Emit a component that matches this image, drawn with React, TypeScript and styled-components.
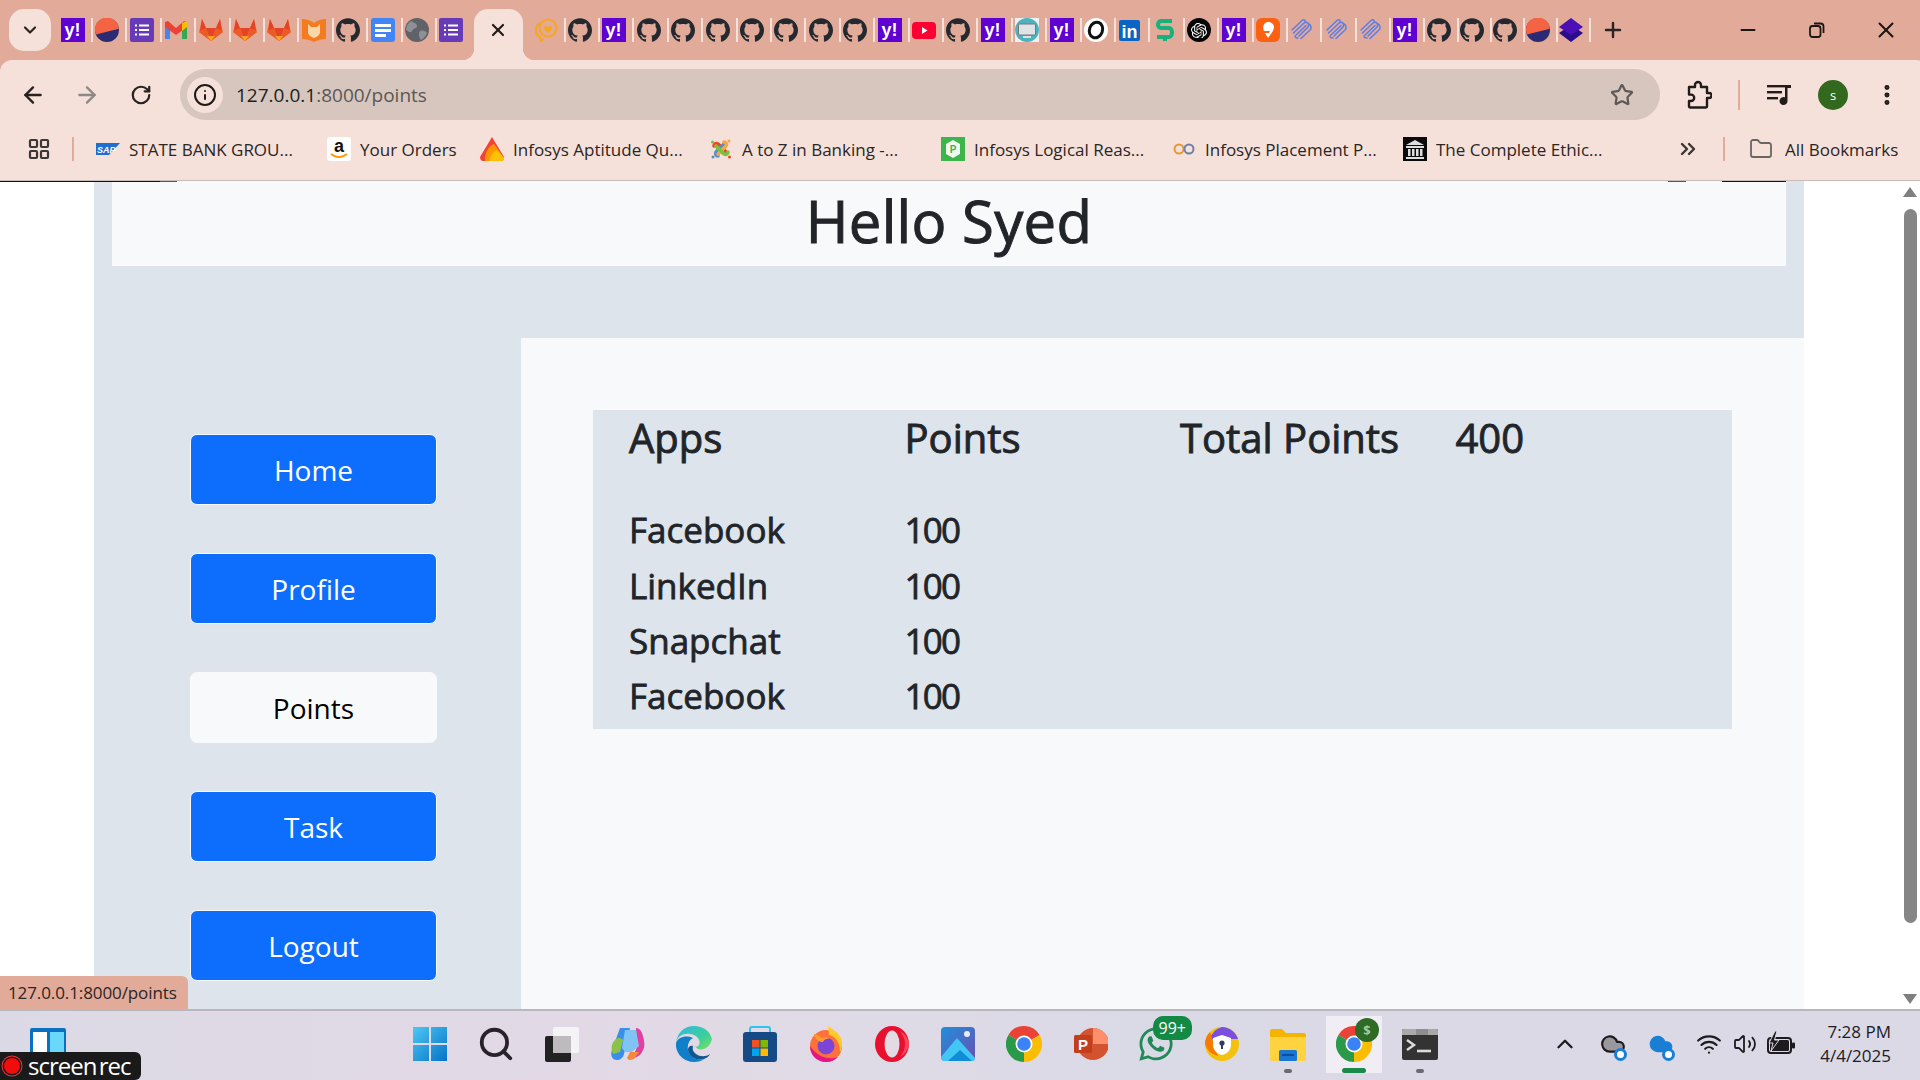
import React from 'react'
import styled, { createGlobalStyle } from 'styled-components'
import {
  ArrowLeft, ArrowRight, RotateCw, Info, Star, EllipsisVertical, Plus, Minus,
  X, ChevronDown, ChevronUp, LayoutGrid, ChevronsRight, Folder, Search, Cloud, Wifi, Volume2,
} from 'lucide-react'
import { SiGithub, SiOpenai } from 'react-icons/si'
import { FaWhatsapp } from 'react-icons/fa'

const GlobalStyle = createGlobalStyle`
  html, body { margin: 0; padding: 0; height: 100%; overflow: hidden; }
  body { font-family: "Open Sans", "Noto Sans", sans-serif; color: #212529; }
  * { box-sizing: border-box; }
`

/* ─── Browser chrome ────────────────────────────────── */

const Root = styled.div`
  display: flex;
  flex-direction: column;
  width: 1920px;
  height: 1080px;
  overflow: hidden;
  position: relative;
  background: #fff;
`

const TabStrip = styled.div`
  height: 60px;
  flex-shrink: 0;
  display: flex;
  align-items: center;
  background: #e2aa99;
  padding-left: 9px;
`

const TabMenu = styled.div`
  width: 42px;
  height: 42px;
  margin-right: 10px;
  border-radius: 15px;
  background: #f5e1da;
  display: flex;
  align-items: center;
  justify-content: center;
  color: #2a2422;
`

const TabSlot = styled.div<{ $tight?: boolean }>`
  width: ${p => (p.$tight ? 33.2 : 34.4)}px;
  flex-shrink: 0;
  display: flex;
  align-items: center;
  gap: 6px;
  height: 24px;
`

const TabSep = styled.span`
  width: 2px;
  height: 24px;
  background: #f5e1da;
  flex-shrink: 0;
`

const ActiveTab = styled.div`
  width: 49px;
  height: 51px;
  margin: 9px 11px 0 0;
  align-self: flex-start;
  background: #f5e1da;
  border-radius: 14px 14px 0 0;
  position: relative;
  display: flex;
  align-items: center;
  justify-content: center;
  padding-bottom: 9px;
  color: #1f1a18;

  &::before, &::after {
    content: '';
    position: absolute;
    bottom: 0;
    width: 12px;
    height: 12px;
  }
  &::before {
    left: -12px;
    background: radial-gradient(circle at 0 0, transparent 12px, #f5e1da 12.5px);
  }
  &::after {
    right: -12px;
    background: radial-gradient(circle at 100% 0, transparent 12px, #f5e1da 12.5px);
  }
`

const NewTab = styled.div`
  margin-left: 8px;
  color: #2a2422;
  display: flex;
`

const WindowControls = styled.div`
  margin-left: auto;
  display: flex;
`

const WindowButton = styled.div`
  width: 69px;
  height: 60px;
  display: flex;
  align-items: center;
  justify-content: center;
  color: #1c1715;
`

const Toolbar = styled.div`
  height: 60px;
  flex-shrink: 0;
  display: flex;
  background: #e2aa99;
`

const ToolbarInner = styled.div`
  flex: 1;
  height: 60px;
  display: flex;
  align-items: center;
  background: #f5e1da;
  border-radius: 12px 12px 0 0;
  padding: 9px 0 0 20px;
`

const NavButton = styled.div<{ $muted?: boolean; $gap: number }>`
  width: 26px;
  margin-right: ${p => p.$gap}px;
  display: flex;
  justify-content: center;
  color: ${p => (p.$muted ? '#8f8885' : '#272220')};
`

const Omnibox = styled.div`
  width: 1480px;
  height: 51px;
  border-radius: 26px;
  background: #d6c6be;
  display: flex;
  align-items: center;
  padding: 0 26px 0 7px;
`

const InfoChip = styled.div`
  width: 36px;
  height: 36px;
  border-radius: 50%;
  background: #f5e1da;
  display: flex;
  align-items: center;
  justify-content: center;
  color: #1f1a18;
  margin-right: 13px;
`

const UrlHost = styled.span`
  font-size: 19px;
  color: #211d1b;
`

const UrlPath = styled.span`
  font-size: 19px;
  color: #5d5654;
`

const StarWrap = styled.div`
  margin-left: auto;
  display: flex;
  color: #5f5856;
`

const ToolIcon = styled.div<{ $w: number }>`
  width: ${p => p.$w}px;
  flex-shrink: 0;
  display: flex;
  justify-content: center;
  align-items: center;
  color: #211c1a;
`

const ToolSep = styled.span`
  width: 2px;
  height: 30px;
  background: #e2aa99;
  flex-shrink: 0;
`

const Avatar = styled.div`
  width: 30px;
  height: 30px;
  flex-shrink: 0;
  border-radius: 50%;
  background: #33691e;
  color: #fff;
  font-size: 13px;
  display: flex;
  align-items: center;
  justify-content: center;
`

const Bookmarks = styled.div`
  height: 61px;
  flex-shrink: 0;
  display: flex;
  align-items: center;
  background: #f5e1da;
  border-bottom: 1px solid #c9bcb6;
  padding: 0 0 2px 27px;
  color: #2a2624;
`

const BarSep = styled.span<{ $l: number; $r: number }>`
  width: 2px;
  height: 24px;
  background: #e2aa99;
  margin: 0 ${p => p.$r}px 0 ${p => p.$l}px;
  flex-shrink: 0;
`

const Bookmark = styled.div<{ $w: number }>`
  width: ${p => p.$w}px;
  flex-shrink: 0;
  display: flex;
  align-items: center;
  gap: 9px;
  font-size: 17px;
  white-space: nowrap;
`

const AllBookmarks = styled.div`
  display: flex;
  align-items: center;
  gap: 12px;
  font-size: 17px;
  white-space: nowrap;
  color: #2a2624;
`

const MutedIcon = styled.span<{ $ml?: number }>`
  display: flex;
  color: #3b3735;
  margin-left: ${p => p.$ml ?? 0}px;
`

/* ─── Page ──────────────────────────────────────────── */

const Viewport = styled.div`
  flex: 1;
  min-height: 0;
  display: flex;
  position: relative;
  overflow: hidden;
  background: #fff;
`

const TopEdge = styled.div`
  position: absolute;
  top: 0;
  left: 0;
  right: 0;
  height: 1px;
  z-index: 2;
  background: linear-gradient(to right,
    #111 0 160px, #a33 160px 177px, transparent 177px 1668px,
    #555 1668px 1686px, transparent 1686px 1722px, #111 1722px 1786px, transparent 1786px);
`

const Container = styled.div`
  margin-left: 94px;
  width: 1710px;
  background: #dee4eb;
  flex-shrink: 0;
  display: flex;
  flex-direction: column;
`

const HelloBar = styled.div`
  margin: 0 18px;
  height: 85px;
  flex-shrink: 0;
  background: #f8f9fa;
  display: flex;
  align-items: center;
  justify-content: center;
`

const Hello = styled.h1`
  margin: 0 0 5px;
  font-size: 58px;
  font-weight: 400;
  line-height: 1.2;
  letter-spacing: 0.3px;
  -webkit-text-stroke: 1px #212529;
  color: #212529;
`

const Columns = styled.div`
  flex: 1;
  min-height: 0;
  display: flex;
  margin-top: 72px;
`

const Sidebar = styled.nav`
  width: 427px;
  flex-shrink: 0;
  padding: 96px 0 0 96px;
  display: flex;
  flex-direction: column;
  gap: 48px;
`

const NavLink = styled.div<{ $active?: boolean }>`
  width: 247px;
  height: 71px;
  flex-shrink: 0;
  border-radius: 7px;
  border: 1px solid #f8f9fa;
  background: ${p => (p.$active ? '#f8f9fa' : '#0d6efd')};
  color: ${p => (p.$active ? '#000' : '#fff')};
  display: flex;
  align-items: center;
  justify-content: center;
  font-size: 28px;
`

const MainPanel = styled.main`
  flex: 1;
  background: #f8f9fa;
  padding: 72px 72px 0 72px;
`

const PointsCard = styled.section`
  background: #dee4eb;
  height: 319px;
  padding-left: 36px;
`

const HeadRow = styled.div`
  display: grid;
  grid-template-columns: repeat(4, 275.5px);
  height: 50px;
  align-items: center;
  margin-bottom: 42px;
  font-size: 40px;
  -webkit-text-stroke: 0.9px #212529;
  white-space: nowrap;
`

const DataRow = styled.div`
  display: grid;
  grid-template-columns: repeat(4, 275.5px);
  height: 55.4px;
  align-items: center;
  font-size: 35px;
  -webkit-text-stroke: 0.8px #212529;
`

const PointValue = styled.span`
  letter-spacing: -1.8px;
`

const Scrollbar = styled.div`
  width: 20px;
  margin-left: auto;
  display: flex;
  flex-direction: column;
  align-items: center;
  padding: 6px 0 5px;
  background: #fff;
`

const ScrollArrow = styled.span<{ $up?: boolean }>`
  width: 0;
  height: 0;
  border-left: 7px solid transparent;
  border-right: 7px solid transparent;
  ${p => (p.$up ? 'border-bottom: 10px solid #7f7f7f;' : 'border-top: 10px solid #7f7f7f;')}
`

const ScrollThumb = styled.div`
  width: 13px;
  height: 714px;
  margin: 12px 0 auto;
  background: #858585;
  border-radius: 7px;
`

const StatusBubble = styled.div`
  position: absolute;
  left: 0;
  bottom: 0;
  z-index: 3;
  width: 188px;
  height: 33px;
  background: #e2aa99;
  border-top-right-radius: 6px;
  display: flex;
  align-items: center;
  padding-left: 8px;
  font-size: 17px;
  letter-spacing: -0.1px;
  color: #2a2624;
`

/* ─── Taskbar ───────────────────────────────────────── */

const Taskbar = styled.footer`
  height: 71px;
  flex-shrink: 0;
  display: flex;
  align-items: center;
  padding: 0 29px 3px 397px;
  border-top: 2px solid #b9b6bd;
  background: linear-gradient(90deg, #dcd9e6 0%, #e2d9e5 30%, #dfdbe6 45%, #dad9e6 60%, #dbd9e5 100%);
`

const TaskSlot = styled.div<{ $active?: boolean }>`
  width: 66px;
  height: 57px;
  flex-shrink: 0;
  position: relative;
  display: flex;
  align-items: center;
  justify-content: center;
  border-radius: 6px;
  ${p => p.$active && `
    background: linear-gradient(#f0eef4, #f0eef4) center / 56px 100% no-repeat;
  `}
`

const RunDot = styled.span<{ $on?: boolean }>`
  position: absolute;
  left: 50%;
  bottom: 0;
  transform: translateX(-50%);
  width: ${p => (p.$on ? 24 : 8)}px;
  height: ${p => (p.$on ? 5 : 4)}px;
  border-radius: 3px;
  background: ${p => (p.$on ? '#1a8a4a' : '#6c6a70')};
`

const CountBadge = styled.span`
  position: absolute;
  top: 0;
  right: -3px;
  padding: 0 6px;
  height: 24px;
  border-radius: 10px;
  background: #138a43;
  color: #fff;
  font-size: 16px;
  line-height: 24px;
`

const ProfileBadge = styled.span`
  position: absolute;
  top: 2px;
  right: 8px;
  width: 24px;
  height: 24px;
  border-radius: 50%;
  background: #2f6b24;
  color: #a5c99a;
  font-size: 13px;
  font-weight: 700;
  display: flex;
  align-items: center;
  justify-content: center;
`

const Tray = styled.div`
  margin-left: auto;
  display: flex;
  align-items: center;
`

const TrayIcon = styled.div<{ $w: number }>`
  width: ${p => p.$w}px;
  display: flex;
  justify-content: center;
  position: relative;
  color: #1d1b1f;
`

const SyncDot = styled.span`
  position: absolute;
  right: 10px;
  bottom: -4px;
  width: 13px;
  height: 13px;
  border-radius: 50%;
  background: #fff;
  border: 3px solid #1a7fd4;
`

const Clock = styled.div`
  width: 86px;
  text-align: right;
  font-size: 17px;
  line-height: 24px;
  color: #1d1b1f;
`

const WidgetIcon = styled.div`
  position: absolute;
  left: 30px;
  bottom: 16px;
  width: 36px;
  height: 36px;
  z-index: 3;
  display: flex;
`

const RecBadge = styled.div`
  position: absolute;
  left: 0;
  bottom: 0;
  z-index: 4;
  width: 141px;
  height: 28px;
  background: #1a1a1a;
  border-radius: 0 6px 6px 0;
  display: flex;
  align-items: center;
  gap: 8px;
  padding: 0 0 2px 3px;
  color: #fff;
  font-size: 24px;
  letter-spacing: -1px;
  word-spacing: -3px;
`

const RecDot = styled.span`
  width: 16px;
  height: 16px;
  flex-shrink: 0;
  border-radius: 50%;
  background: #f20d0d;
  box-shadow: 0 0 0 1.5px #1a1a1a, 0 0 0 2.5px #e33;
  margin: 2px 0 0 1px;
`

/* ─── Tab favicons ──────────────────────────────────── */

type Fav =
  | 'yahoo' | 'half' | 'list' | 'gmail' | 'gitlab' | 'book' | 'github' | 'docs' | 'globe' | 'chat'
  | 'youtube' | 'monitor' | 'ring' | 'linkedin' | 'stripe' | 'gpt' | 'swiggy' | 'squiggle' | 'diamond'

function Favicon({ kind }: { kind: Fav }) {
  if (kind === 'github') return <SiGithub size={24} color="#24292f" style={{ flexShrink: 0 }} />
  return (
    <svg width="24" height="24" viewBox="0 0 24 24" style={{ flexShrink: 0 }}>
      {kind === 'yahoo' && (
        <>
          <rect width="24" height="24" fill="#5f01d1" />
          <text x="11.5" y="18" textAnchor="middle" fontFamily="Liberation Sans" fontWeight="700" fontSize="18" fill="#fff">y!</text>
        </>
      )}
      {kind === 'half' && (
        <>
          <circle cx="12" cy="12" r="12" fill="#2b2a72" />
          <path d="M1 16.5A12 12 0 1 1 23.9 10.8Z" fill="#f46344" />
        </>
      )}
      {kind === 'list' && (
        <>
          <rect width="24" height="24" rx="2" fill="#673ab7" />
          <path d="M9 7.5h10M9 12h10M9 16.5h10" stroke="#fff" strokeWidth="2" />
          <path d="M5 7.5h2M5 12h2M5 16.5h2" stroke="#fff" strokeWidth="2" />
        </>
      )}
      {kind === 'gmail' && (
        <>
          <path d="M1 6v15h5V10Z" fill="#4285f4" />
          <path d="M23 6v15h-5V10Z" fill="#34a853" />
          <path d="M1 4v5l11 8 11-8V4l-3-1-8 7-8-7Z" fill="#ea4335" />
          <path d="M18 5l5-2v6l-5 4Z" fill="#fbbc04" />
        </>
      )}
      {kind === 'gitlab' && (
        <>
          <path d="M12 23 0 14 3 1l4 9h10l4-9 3 13Z" fill="#fc6d26" />
          <path d="M12 23 7 10h10Z" fill="#e24329" />
          <path d="M0 14 7 10h0l5 13ZM24 14l-7-4-5 13Z" fill="#ec5a28" />
          <path d="M3 1 7 10 1 13ZM21 1l-4 9 6 3Z" fill="#e24329" />
          <path d="M12 23 8 18h8Z" fill="#fca326" />
        </>
      )}
      {kind === 'book' && (
        <>
          <path d="M0 1c4 0 8 1 12 4 4-3 8-4 12-4v20c-4 0-8 1-12 3-4-2-8-3-12-3Z" fill="#f47b20" />
          <path d="M6 6l3 3h6l3-3v8c0 3-3 5-6 6-3-1-6-3-6-6Z" fill="#fbd7a8" />
        </>
      )}
      {kind === 'docs' && (
        <>
          <rect width="24" height="24" rx="3" fill="#4285f4" />
          <path d="M4 6h16v3H4ZM4 11h16v3H4ZM4 16h11v3H4Z" fill="#fff" />
        </>
      )}
      {kind === 'globe' && (
        <>
          <circle cx="12" cy="12" r="12" fill="#5f6368" />
          <path d="M6 3c3 2 6 2 6 5s-4 2-5 5-4 0-6-1c0-4 2-7 5-9ZM15 13c3-1 6 0 7 2-1 3-4 6-6 7-2-2-3-7-1-9Z" fill="#8d9094" />
        </>
      )}
      {kind === 'chat' && (
        <>
          <circle cx="14" cy="10" r="8.5" fill="none" stroke="#f5a623" strokeWidth="2" />
          <path d="M6 5a8 8 0 0 0 0 14l1 4 3-2" fill="none" stroke="#f5a623" strokeWidth="2" />
          <path d="M14 15c-3-2-5-4-4-6 1-1.5 3-1 4 .5 1-1.5 3-2 4-.5 1 2-1 4-4 6Z" fill="#f5a623" />
        </>
      )}
      {kind === 'youtube' && (
        <>
          <rect y="4" width="24" height="17" rx="4" fill="#ff0033" />
          <path d="M10 9l5.5 3.5L10 16Z" fill="#fff" />
        </>
      )}
      {kind === 'monitor' && (
        <>
          <rect width="24" height="24" fill="#eef3f2" />
          <circle cx="12" cy="12" r="12" fill="#4fb3bf" />
          <rect x="3.5" y="6" width="17" height="11" rx="1" fill="#dfe3e6" stroke="#6c7a80" strokeWidth="1" />
          <rect x="8" y="18" width="8" height="2" fill="#dfe3e6" />
        </>
      )}
      {kind === 'ring' && (
        <>
          <circle cx="12" cy="12" r="12" fill="#fff" />
          <ellipse cx="12" cy="12" rx="6.5" ry="8" fill="none" stroke="#111" strokeWidth="3" transform="rotate(20 12 12)" />
        </>
      )}
      {kind === 'linkedin' && (
        <>
          <rect x="1" y="2" width="21" height="21" rx="2" fill="#0a66c2" />
          <text x="11.5" y="19.5" textAnchor="middle" fontFamily="Liberation Sans" fontWeight="700" fontSize="18" fill="#fff">in</text>
        </>
      )}
      {kind === 'stripe' && (
        <path d="M19 3H8C4 3 4 10 8 10h8c4 0 4 9 0 9H4M12 1v2M12 19v4" fill="none" stroke="#17b27c" strokeWidth="4" />
      )}
      {kind === 'gpt' && (
        <>
          <circle cx="12" cy="12" r="12" fill="#050505" />
          <foreignObject x="4" y="4" width="16" height="16">
            <SiOpenai size={16} color="#fff" />
          </foreignObject>
        </>
      )}
      {kind === 'swiggy' && (
        <>
          <rect width="24" height="24" rx="6" fill="#fc6011" />
          <path d="M12 4c4 0 6 3 6 5 0 4-4 8-6 11-1-2-2-3-3-5h4l1-2H8C6 9 8 4 12 4Z" fill="#fff" />
        </>
      )}
      {kind === 'squiggle' && (
        <g fill="none" stroke="#5b7de8" strokeWidth="1.5" strokeLinecap="round">
          <path d="M2 12 12 2.5c2-1.5 4 0 3 2" />
          <path d="M3.5 15 14 5c3-2 6 1 4 4L9 18" />
          <path d="M6 17 16 7.5M8 20c-2 0-3-1-3-2" />
          <path d="M11 20.5 20 12c2-2 1-5-1-6" />
        </g>
      )}
      {kind === 'diamond' && (
        <>
          <path d="M12 7 24 15 12 24 0 15Z" fill="#2a0d8a" />
          <path d="M12 0 24 9 12 17 0 9Z" fill="#4a10b5" />
        </>
      )}
    </svg>
  )
}

/* ─── Bookmark favicons ─────────────────────────────── */

type Mark = 'sap' | 'amazon' | 'flame' | 'joomla' | 'green' | 'infinity' | 'museum'

function BookmarkIcon({ kind }: { kind: Mark }) {
  return (
    <svg width="24" height="24" viewBox="0 0 24 24" style={{ flexShrink: 0 }}>
      {kind === 'sap' && (
        <>
          <path d="M0 6h24L13 18H0Z" fill="#1f6fd0" />
          <text x="1" y="15.5" fontFamily="Liberation Sans" fontWeight="700" fontStyle="italic" fontSize="9" fill="#fff">SAP</text>
        </>
      )}
      {kind === 'amazon' && (
        <>
          <rect width="24" height="24" rx="3" fill="#fff" />
          <text x="12" y="15" textAnchor="middle" fontFamily="Liberation Sans" fontWeight="700" fontSize="18" fill="#111">a</text>
          <path d="M4 17c5 4 11 4 16 0" fill="none" stroke="#f90" strokeWidth="2" />
        </>
      )}
      {kind === 'flame' && (
        <>
          <path d="M12 0 24 20c0 2-1 4-3 4H3c-2 0-3-2-3-4Z" fill="#f44336" />
          <path d="M14 7 24 21c0 2-1 3-3 3H5C4 16 9 9 14 7Z" fill="#ff9800" />
          <path d="M17 13 24 21c0 2-1 3-3 3H10c0-5 3-9 7-11Z" fill="#ffc107" />
        </>
      )}
      {kind === 'joomla' && (
        <g fill="none" strokeWidth="3.6" strokeLinecap="round">
          <path d="M5 9c0-2 2-3 4-2l8 8" stroke="#f44321" />
          <path d="M9 19c-2 0-3-2-2-4l8-8" stroke="#5091cd" />
          <path d="M15 5c2 0 3 2 2 4l-8 8" stroke="#f9a541" />
          <path d="M19 15c0 2-2 3-4 2L7 9" stroke="#7ac143" />
          <circle cx="3.5" cy="5" r="1.5" fill="#7ac143" stroke="none" />
          <circle cx="20" cy="4" r="1.5" fill="#f9a541" stroke="none" />
          <circle cx="4" cy="20" r="1.5" fill="#5091cd" stroke="none" />
          <circle cx="20.5" cy="20" r="1.5" fill="#f44321" stroke="none" />
        </g>
      )}
      {kind === 'green' && (
        <>
          <rect width="24" height="24" fill="#3cb54a" />
          <path d="M12 3 19 7v10l-7 4-7-4V7Z" fill="#f0faf0" />
          <text x="12" y="16" textAnchor="middle" fontFamily="Liberation Sans" fontWeight="700" fontSize="10" fill="#3cb54a">P</text>
        </>
      )}
      {kind === 'infinity' && (
        <>
          <circle cx="7" cy="12" r="4.5" fill="none" stroke="#e6973a" strokeWidth="2" />
          <circle cx="17" cy="12" r="4.5" fill="none" stroke="#6c7fa8" strokeWidth="2" />
        </>
      )}
      {kind === 'museum' && (
        <>
          <rect width="24" height="24" fill="#0a0a0a" />
          <path d="M3 8 12 3l9 5ZM3 9h18v2H3ZM3 20h18v2H3Z" fill="#ddd" />
          <path d="M5 12h2.5v7H5ZM9 12h2.5v7H9ZM13 12h2.5v7H13ZM17 12h2.5v7H17Z" fill="#ddd" />
        </>
      )}
    </svg>
  )
}

/* ─── Toolbar and tray glyphs ───────────────────────── */

function RestoreIcon() {
  return (
    <svg width="16" height="16" viewBox="0 0 16 16" fill="none" stroke="currentColor" strokeWidth="1.8">
      <rect x="1" y="4" width="10.5" height="11" rx="2.5" />
      <path d="M5 1.5h6.5a3 3 0 0 1 3 3V11" />
    </svg>
  )
}

function ExtensionIcon() {
  return (
    <svg width="26" height="30" viewBox="0 0 26 30" fill="none" stroke="currentColor" strokeWidth="2.4" strokeLinejoin="round">
      <path d="M3 7h6V5a3 3 0 0 1 6 0v2h6v6h2a2.5 2.5 0 0 1 0 5h-2v8a1.5 1.5 0 0 1-1.5 1.5h-15A1.5 1.5 0 0 1 3 26v-5h2a3.2 3.2 0 0 0 0-6.4H3Z" />
    </svg>
  )
}

function MediaIcon() {
  return (
    <svg width="26" height="24" viewBox="0 0 26 24" fill="currentColor">
      <rect x="0" y="2" width="18" height="2.4" />
      <rect x="0" y="8" width="15" height="2.4" />
      <rect x="0" y="14" width="11" height="2.4" />
      <path d="M18 2h6v3h-3.5v13a4 4 0 1 1-2.5-3.7Z" />
    </svg>
  )
}

function BatteryIcon() {
  return (
    <svg width="30" height="28" viewBox="0 0 30 28">
      <rect x="2" y="8" width="23" height="15" rx="3" fill="none" stroke="#1d1b1f" strokeWidth="2" />
      <rect x="26" y="12.5" width="3" height="6" rx="1" fill="#1d1b1f" />
      <rect x="4" y="10" width="19" height="11" rx="1.5" fill="#1d1b1f" />
      <path d="M9 1 3 13h4l-2 8 8-11H8.5L11 1Z" fill="#1d1b1f" stroke="#dcd9e5" strokeWidth="1" />
    </svg>
  )
}

/* ─── Taskbar apps ──────────────────────────────────── */

type App =
  | 'start' | 'taskview' | 'copilot' | 'edge' | 'store' | 'firefox' | 'opera' | 'photos' | 'chrome'
  | 'ppt' | 'vpn' | 'files' | 'terminal'

function AppIcon({ kind }: { kind: App }) {
  return (
    <svg width="36" height="36" viewBox="0 0 36 36">
      <defs>
        <linearGradient id="winBlue" x1="0" y1="0" x2="1" y2="1">
          <stop offset="0" stopColor="#4cc8f4" />
          <stop offset="1" stopColor="#0672c6" />
        </linearGradient>
        <linearGradient id="edgeGrad" x1="0" y1="0" x2="1" y2="1">
          <stop offset="0" stopColor="#2fb9e0" />
          <stop offset="0.6" stopColor="#3ccf9a" />
          <stop offset="1" stopColor="#7be05f" />
        </linearGradient>
        <linearGradient id="photoGrad" x1="0" y1="0" x2="1" y2="1">
          <stop offset="0" stopColor="#1f8fdc" />
          <stop offset="1" stopColor="#6d4fb0" />
        </linearGradient>
      </defs>
      {kind === 'start' && <path d="M1 1h16v16H1ZM19 1h16v16H19ZM1 19h16v16H1ZM19 19h16v16H19Z" fill="url(#winBlue)" />}
      {kind === 'taskview' && (
        <>
          <rect x="1" y="10" width="26" height="26" rx="2" fill="#222" />
          <rect x="9" y="1" width="26" height="26" rx="2" fill="#f4f3f6" />
          <rect x="9" y="10" width="18" height="17" fill="#bdbbbd" />
        </>
      )}
      {kind === 'copilot' && (
        <>
          <path d="M10 2h10l-6 26c-1 4-4 6-7 6-5 0-7-5-5-10Z" fill="#3a8fe8" />
          <path d="M5 14c3-3 6-2 8 0l-3 12-7 2C0 22 2 17 5 14Z" fill="#8bc34a" />
          <path d="M26 2c4 0 6 4 7 8s3 11-1 16c-2 4-6 6-11 6l5-8c2-6 0-14 0-22Z" fill="#e040a0" />
          <path d="M15 4h11l3 16-7 6h-7l-3-4Z" fill="#7fc4f4" />
          <path d="M20 26h9l-5 7c-3 2-6 1-7-1Z" fill="#f58a3c" />
        </>
      )}
      {kind === 'edge' && (
        <>
          <path d="M18 0C8 0 1 7 0 17c1-7 8-10 14-9 8 1 11 7 9 11-1 2-3 2-4 1 4 7 15 3 17-7C34 5 27 0 18 0Z" fill="url(#edgeGrad)" />
          <path d="M0 17c-1 11 8 19 18 19 4 0 8-1 10-3-8 2-14-2-16-9-1-5 1-10 5-12C10 9 2 11 0 17Z" fill="#0f7fc9" />
          <path d="M12 24c1 6 7 11 16 9 3-1 5-3 6-5-4 3-10 3-14 0-3-2-4-5-3-8-3-1-5 1-5 4Z" fill="#11578f" />
        </>
      )}
      {kind === 'store' && (
        <>
          <path d="M8 7V3c0-1 1-2 2-2h16c1 0 2 1 2 2v4" fill="none" stroke="#2fc3f0" strokeWidth="2" />
          <rect x="1" y="6" width="34" height="30" rx="3" fill="#164a86" />
          <rect x="10" y="14" width="7.5" height="7.5" fill="#f25022" />
          <rect x="18.5" y="14" width="7.5" height="7.5" fill="#7fba00" />
          <rect x="10" y="22.5" width="7.5" height="7.5" fill="#00a4ef" />
          <rect x="18.5" y="22.5" width="7.5" height="7.5" fill="#ffb900" />
        </>
      )}
      {kind === 'firefox' && (
        <>
          <circle cx="18" cy="20" r="16" fill="#ff7139" />
          <path d="M2 20c0 9 7 16 16 16 5 0 9-2 12-5-8 3-20 1-28-11Z" fill="#e31587" />
          <path d="M20 0c4 3 10 6 13 12 2 5 1 11-1 14C32 16 27 10 21 9Z" fill="#ffca2b" />
          <circle cx="18" cy="20" r="8.5" fill="#7d44d8" />
          <path d="M6 8c3 0 5 2 7 4 4-2 7-1 9 1-4-1-6 1-7 3-4 0-8-2-9-8Z" fill="#ff9a2e" />
        </>
      )}
      {kind === 'opera' && (
        <>
          <ellipse cx="18" cy="18" rx="17" ry="18" fill="#e8102e" />
          <ellipse cx="18" cy="18" rx="7.5" ry="13.5" fill="#e3dbe3" />
          <path d="M26 5c5 3 9 8 9 13s-4 10-9 13c3-4 5-8 5-13s-2-9-5-13Z" fill="#f9485a" />
        </>
      )}
      {kind === 'photos' && (
        <>
          <rect x="1" y="1" width="34" height="34" rx="4" fill="url(#photoGrad)" />
          <circle cx="27" cy="8" r="3" fill="#e7edf8" />
          <path d="M1 31 17 12l18 20v0a3 3 0 0 1-3 3H5a4 4 0 0 1-4-4Z" fill="#42c7f5" />
          <path d="M8 35 20 24l12 11Z" fill="#0f8dd8" />
        </>
      )}
      {kind === 'chrome' && (
        <>
          <path d="M18 18 2.4 9A18 18 0 0 1 33.6 9Z" fill="#ea4335" />
          <path d="M18 18 33.6 9A18 18 0 0 1 18 36Z" fill="#fbbc04" />
          <path d="M18 18 18 36A18 18 0 0 1 2.4 9Z" fill="#2a9a4a" />
          <circle cx="18" cy="18" r="8.5" fill="#fff" />
          <circle cx="18" cy="18" r="6.8" fill="#3b82f6" />
        </>
      )}
      {kind === 'ppt' && (
        <>
          <circle cx="21" cy="18" r="16" fill="#d35230" />
          <path d="M21 2a16 16 0 0 1 16 16H21Z" fill="#ff8f6b" />
          <rect x="2" y="9" width="18" height="18" rx="1.5" fill="#c43e1c" />
          <text x="11" y="24" textAnchor="middle" fontFamily="Liberation Sans" fontWeight="700" fontSize="15" fill="#fff">P</text>
        </>
      )}
      {kind === 'vpn' && (
        <>
          <circle cx="18" cy="18" r="17" fill="#f4c20d" />
          <path d="M18 1a17 17 0 0 1 16 12H6A17 17 0 0 1 18 1Z" fill="#7a4fe0" />
          <path d="M1 18A17 17 0 0 1 6 6l8 24a17 17 0 0 1-13-12Z" fill="#f57c00" />
          <path d="M18 9l9 3v7c0 5-4 9-9 10-5-1-9-5-9-10v-7Z" fill="#fff" />
          <circle cx="18" cy="17" r="2.6" fill="#333a5e" />
          <rect x="17" y="18" width="2" height="5" fill="#333a5e" />
        </>
      )}
      {kind === 'files' && (
        <>
          <path d="M0 5c0-1 1-2 2-2h10l4 4h18c1 0 2 1 2 2v24H0Z" fill="#f5b400" />
          <path d="M0 11h36v22c0 1-1 2-2 2H2c-1 0-2-1-2-2Z" fill="#ffd23f" />
          <rect x="9" y="24" width="18" height="11" rx="1.5" fill="#1976d2" />
          <rect x="12" y="28" width="12" height="2" fill="#0c4f96" />
        </>
      )}
      {kind === 'terminal' && (
        <>
          <rect y="3" width="36" height="31" rx="2" fill="#333" />
          <path d="M0 5c0-1 1-2 2-2h12v6H0Z" fill="#aaa" />
          <path d="M14 3h12v6H14Z" fill="#8e8e8e" />
          <path d="M26 3h8c1 0 2 1 2 2v4H26Z" fill="#a8a8a8" />
          <path d="M5 14l7 5-7 5" fill="none" stroke="#ddd" strokeWidth="2.4" />
          <path d="M15 25h14" stroke="#ddd" strokeWidth="2.6" />
        </>
      )}
    </svg>
  )
}

/* ─── Data ──────────────────────────────────────────── */

const leftTabs: Fav[] = ['yahoo', 'half', 'list', 'gmail', 'gitlab', 'gitlab', 'gitlab', 'book', 'github', 'docs', 'globe', 'list']

const gh: Fav = 'github'
const rightTabs: Fav[] = [
  'chat', gh, 'yahoo', gh, gh, gh, gh, gh, gh, gh, 'yahoo', 'youtube', gh, 'yahoo', 'monitor', 'yahoo', 'ring',
  'linkedin', 'stripe', 'gpt', 'yahoo', 'swiggy', 'squiggle', 'squiggle', 'squiggle', 'yahoo', gh, gh, gh, 'half', 'diamond',
]

const bookmarks: { icon: Mark; label: string; width: number }[] = [
  { icon: 'sap', label: 'STATE BANK GROU...', width: 231 },
  { icon: 'amazon', label: 'Your Orders', width: 153 },
  { icon: 'flame', label: 'Infosys Aptitude Qu...', width: 229 },
  { icon: 'joomla', label: 'A to Z in Banking -...', width: 232 },
  { icon: 'green', label: 'Infosys Logical Reas...', width: 231 },
  { icon: 'infinity', label: 'Infosys Placement P...', width: 231 },
  { icon: 'museum', label: 'The Complete Ethic...', width: 231 },
]

const navItems = ['Home', 'Profile', 'Points', 'Task', 'Logout']

const points = [
  { app: 'Facebook', value: 100 },
  { app: 'LinkedIn', value: 100 },
  { app: 'Snapchat', value: 100 },
  { app: 'Facebook', value: 100 },
]

const taskApps: App[] = ['start', 'taskview', 'copilot', 'edge', 'store', 'firefox', 'opera', 'photos', 'chrome', 'ppt']

/* ─── Component ─────────────────────────────────────── */
export default function App() {
  return (
    <Root>
      <GlobalStyle />

      <TabStrip>
        <TabMenu><ChevronDown size={20} strokeWidth={2.6} /></TabMenu>
        {leftTabs.map((fav, i) => (
          <TabSlot key={i}>
            <Favicon kind={fav} />
            {i < leftTabs.length - 1 && <TabSep />}
          </TabSlot>
        ))}
        <ActiveTab><X size={20} strokeWidth={2.6} /></ActiveTab>
        {rightTabs.map((fav, i) => (
          <TabSlot key={i} $tight={i >= 25}>
            <Favicon kind={fav} />
            <TabSep />
          </TabSlot>
        ))}
        <NewTab><Plus size={24} strokeWidth={2.4} /></NewTab>
        <WindowControls>
          <WindowButton><Minus size={22} strokeWidth={2.4} /></WindowButton>
          <WindowButton><RestoreIcon /></WindowButton>
          <WindowButton><X size={26} strokeWidth={1.9} /></WindowButton>
        </WindowControls>
      </TabStrip>

      <Toolbar>
        <ToolbarInner>
          <NavButton $gap={28}><ArrowLeft size={26} strokeWidth={2.2} /></NavButton>
          <NavButton $gap={28} $muted><ArrowRight size={26} strokeWidth={2.2} /></NavButton>
          <NavButton $gap={26}><RotateCw size={22} strokeWidth={2.4} /></NavButton>
          <Omnibox>
            <InfoChip><Info size={24} strokeWidth={2} /></InfoChip>
            <UrlHost>127.0.0.1</UrlHost>
            <UrlPath>:8000/points</UrlPath>
            <StarWrap><Star size={24} strokeWidth={2.2} /></StarWrap>
          </Omnibox>
          <ToolIcon $w={78}><ExtensionIcon /></ToolIcon>
          <ToolSep />
          <ToolIcon $w={80}><MediaIcon /></ToolIcon>
          <ToolIcon $w={26}><Avatar>s</Avatar></ToolIcon>
          <ToolIcon $w={82}><EllipsisVertical size={26} strokeWidth={2.6} /></ToolIcon>
        </ToolbarInner>
      </Toolbar>

      <Bookmarks>
        <MutedIcon><LayoutGrid size={24} strokeWidth={2.2} /></MutedIcon>
        <BarSep $l={21} $r={22} />
        {bookmarks.map(b => (
          <Bookmark key={b.label} $w={b.width}>
            <BookmarkIcon kind={b.icon} />
            {b.label}
          </Bookmark>
        ))}
        <MutedIcon $ml={42}><ChevronsRight size={24} strokeWidth={2.4} /></MutedIcon>
        <BarSep $l={23} $r={24} />
        <AllBookmarks>
          <MutedIcon><Folder size={24} strokeWidth={1.8} color="#6a6563" /></MutedIcon>
          All Bookmarks
        </AllBookmarks>
      </Bookmarks>

      <Viewport>
        <TopEdge />
        <Container>
          <HelloBar>
            <Hello>Hello Syed</Hello>
          </HelloBar>
          <Columns>
            <Sidebar>
              {navItems.map(item => (
                <NavLink key={item} $active={item === 'Points'}>{item}</NavLink>
              ))}
            </Sidebar>
            <MainPanel>
              <PointsCard>
                <HeadRow>
                  <span>Apps</span>
                  <span>Points</span>
                  <span>Total Points</span>
                  <span>400</span>
                </HeadRow>
                {points.map((row, i) => (
                  <DataRow key={i}>
                    <span>{row.app}</span>
                    <PointValue>{row.value}</PointValue>
                  </DataRow>
                ))}
              </PointsCard>
            </MainPanel>
          </Columns>
        </Container>
        <Scrollbar>
          <ScrollArrow $up />
          <ScrollThumb />
          <ScrollArrow />
        </Scrollbar>
        <StatusBubble>127.0.0.1:8000/points</StatusBubble>
      </Viewport>

      <Taskbar>
        {taskApps.map((app, i) => (
          <React.Fragment key={i}>
            <TaskSlot><AppIcon kind={app} /></TaskSlot>
            {app === 'start' && (
              <TaskSlot><Search size={38} strokeWidth={2.4} color="#26242a" /></TaskSlot>
            )}
          </React.Fragment>
        ))}
        <TaskSlot>
          <FaWhatsapp size={38} color="#1f8a57" />
          <CountBadge>99+</CountBadge>
        </TaskSlot>
        <TaskSlot><AppIcon kind="vpn" /></TaskSlot>
        <TaskSlot>
          <AppIcon kind="files" />
          <RunDot />
        </TaskSlot>
        <TaskSlot $active>
          <AppIcon kind="chrome" />
          <ProfileBadge>$</ProfileBadge>
          <RunDot $on />
        </TaskSlot>
        <TaskSlot>
          <AppIcon kind="terminal" />
          <RunDot />
        </TaskSlot>
        <Tray>
          <TrayIcon $w={48}><ChevronUp size={26} strokeWidth={2.2} /></TrayIcon>
          <TrayIcon $w={48}>
            <Cloud size={26} strokeWidth={2} fill="#9a989c" />
            <SyncDot />
          </TrayIcon>
          <TrayIcon $w={48}>
            <Cloud size={26} strokeWidth={1} fill="#1a7fd4" color="#1a7fd4" />
            <SyncDot />
          </TrayIcon>
          <TrayIcon $w={48}><Wifi size={26} strokeWidth={2} /></TrayIcon>
          <TrayIcon $w={24}><Volume2 size={26} strokeWidth={1.8} /></TrayIcon>
          <TrayIcon $w={48}><BatteryIcon /></TrayIcon>
          <Clock>7:28 PM<br />4/4/2025</Clock>
        </Tray>
      </Taskbar>

      <WidgetIcon>
        <svg width="36" height="36" viewBox="0 0 36 36">
          <rect width="36" height="36" rx="2" fill="#0a70c0" />
          <rect x="3" y="4" width="14" height="32" fill="#fff" />
          <rect x="20" y="4" width="14" height="22" fill="#6ad8fb" />
          <rect x="20" y="27" width="14" height="9" fill="#2aa5e8" />
        </svg>
      </WidgetIcon>
      <RecBadge>
        <RecDot />
        screen rec
      </RecBadge>
    </Root>
  )
}
